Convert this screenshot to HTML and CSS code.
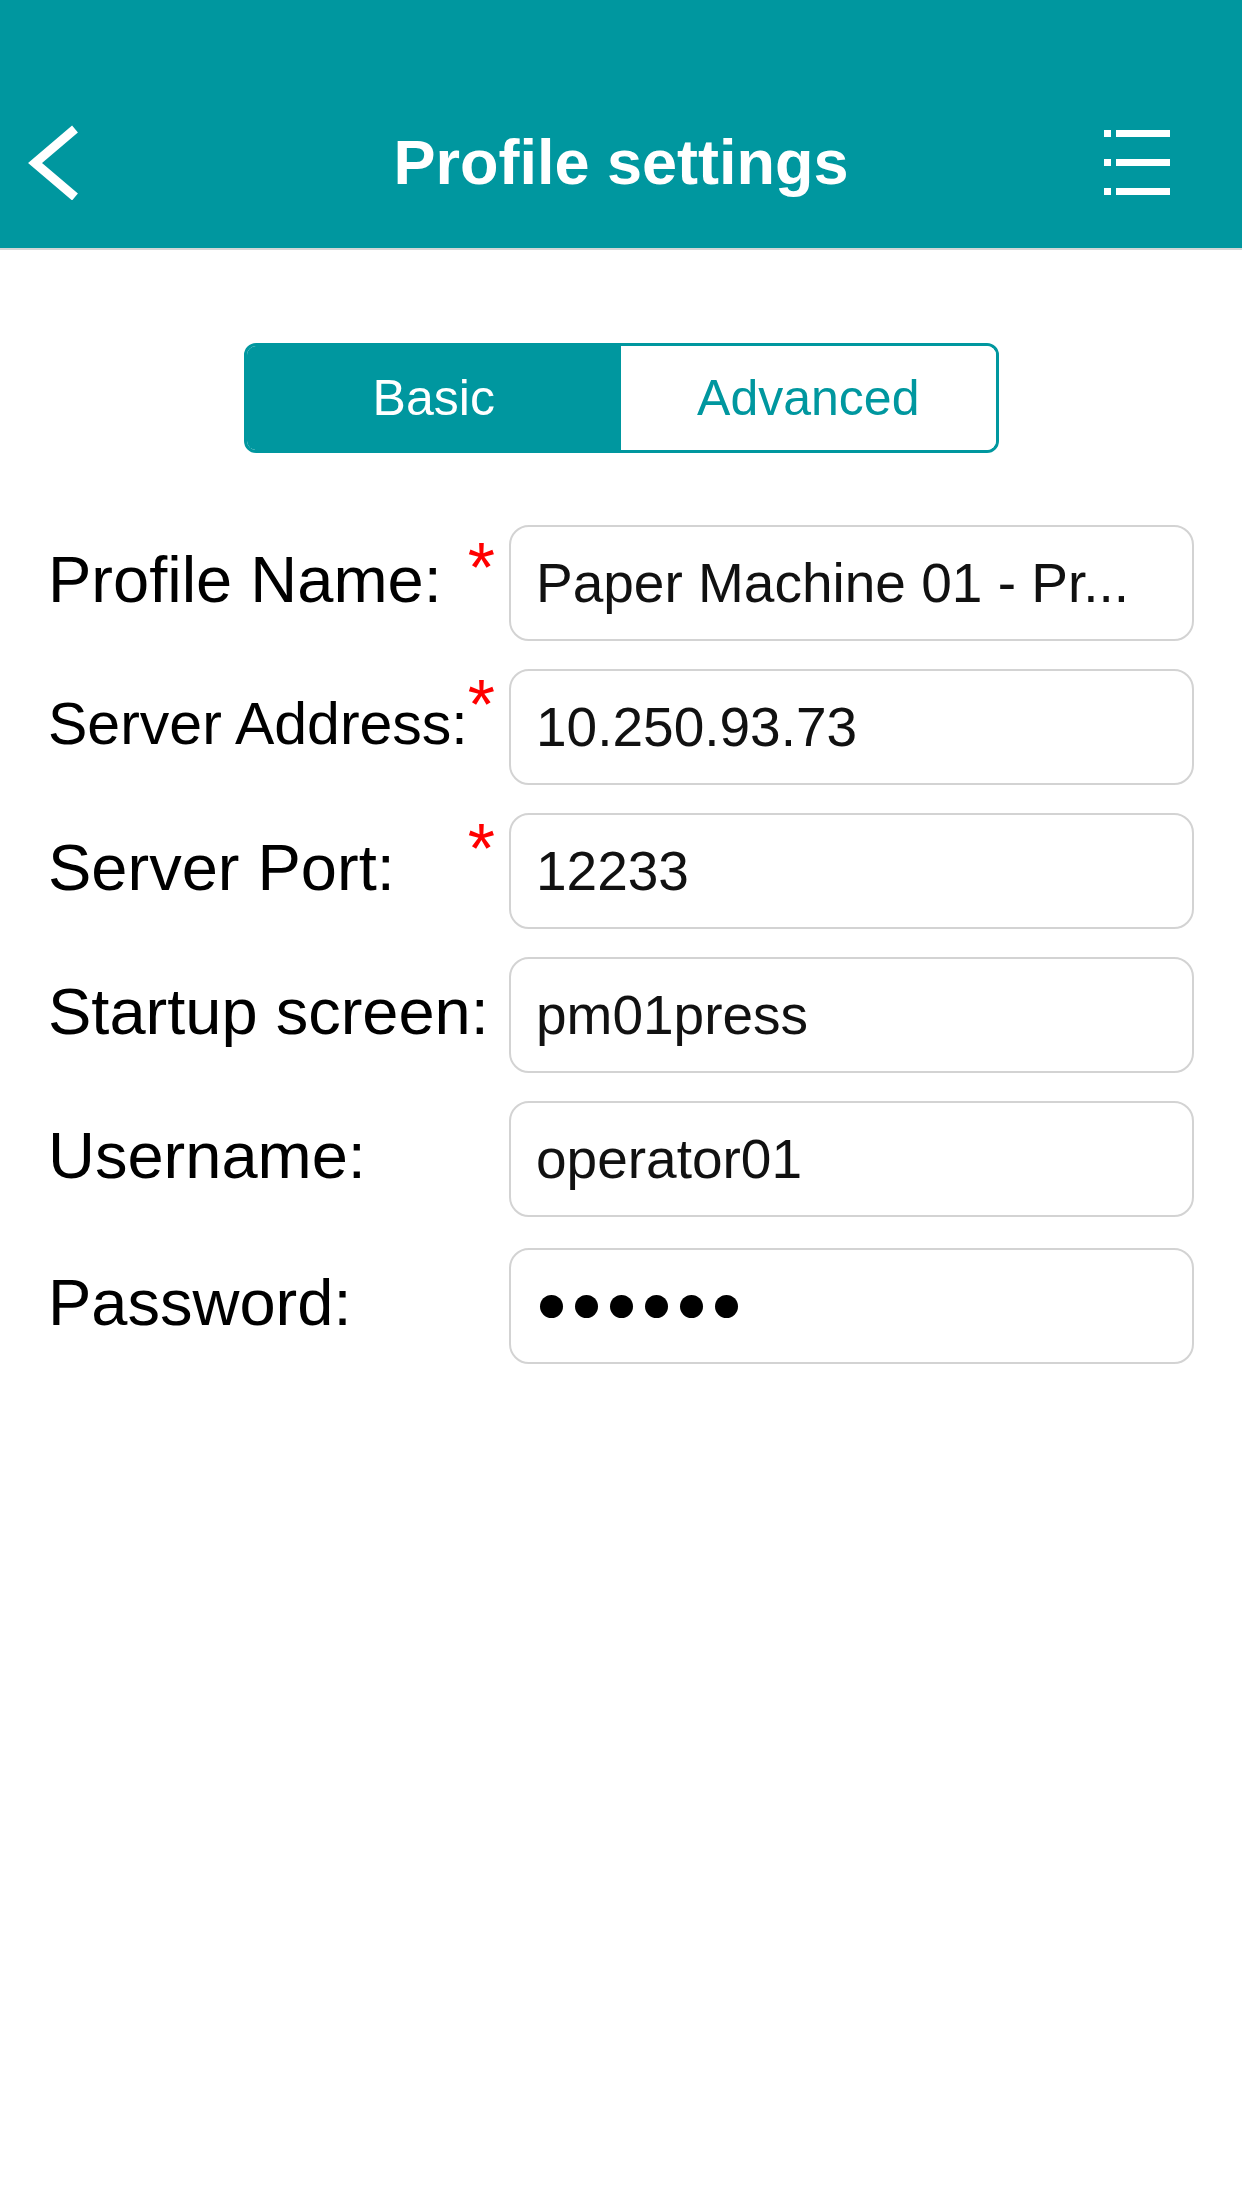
FILE: index.html
```html
<!DOCTYPE html>
<html lang="en">
<head>
<meta charset="utf-8">
<title>Profile settings</title>
<link rel="stylesheet" href="styles.css">
</head>
<body>
<header class="navbar">
  <div class="nav-side nav-left">
    <svg class="icon-back" width="52" height="76" viewBox="0 0 52 76" aria-hidden="true">
      <polyline points="47,5 7,39 47,73" fill="none" stroke="#fff" stroke-width="9" stroke-linejoin="miter"/>
    </svg>
  </div>
  <h1 class="nav-title">Profile settings</h1>
  <div class="nav-side nav-right">
    <svg class="icon-menu" width="66" height="70" viewBox="0 0 66 70" aria-hidden="true">
      <rect x="0" y="3" width="7" height="7" fill="#fff"/>
      <rect x="12" y="3" width="54" height="7" fill="#fff"/>
      <rect x="0" y="32" width="7" height="7" fill="#fff"/>
      <rect x="12" y="32" width="54" height="7" fill="#fff"/>
      <rect x="0" y="61" width="7" height="7" fill="#fff"/>
      <rect x="12" y="61" width="54" height="7" fill="#fff"/>
    </svg>
  </div>
</header>

<main class="content">
  <div class="segmented">
    <div class="seg seg-active">Basic</div>
    <div class="seg">Advanced</div>
  </div>

  <div class="form">
    <div class="row">
      <div class="label-cell"><span class="label">Profile Name:</span><span class="req req-first">*</span></div>
      <div class="field">Paper Machine 01 - Pr...</div>
    </div>
    <div class="row">
      <div class="label-cell"><span class="label label-small">Server Address:</span><span class="req">*</span></div>
      <div class="field">10.250.93.73</div>
    </div>
    <div class="row">
      <div class="label-cell"><span class="label">Server Port:</span><span class="req">*</span></div>
      <div class="field">12233</div>
    </div>
    <div class="row">
      <div class="label-cell"><span class="label">Startup screen:</span></div>
      <div class="field">pm01press</div>
    </div>
    <div class="row">
      <div class="label-cell"><span class="label">Username:</span></div>
      <div class="field">operator01</div>
    </div>
    <div class="row row-password">
      <div class="label-cell"><span class="label">Password:</span></div>
      <div class="field">
        <div class="dots"><span class="dot"></span><span class="dot"></span><span class="dot"></span><span class="dot"></span><span class="dot"></span><span class="dot"></span></div>
      </div>
    </div>
  </div>
</main>
</body>
</html>
```

FILE: styles.css
```css
* {
  box-sizing: border-box;
}

html, body {
  margin: 0;
  padding: 0;
  background: #ffffff;
}

body {
  width: 1242px;
  min-height: 2208px;
  font-family: "Liberation Sans", Arial, Helvetica, sans-serif;
  color: #000;
}

.navbar {
  height: 250px;
  background: #00979f;
  border-bottom: 2px solid #d2d6d6;
  display: flex;
  align-items: center;
  padding-top: 76px;
}

.nav-side {
  width: 200px;
  flex: none;
  display: flex;
  align-items: center;
}

.nav-left {
  padding-left: 28px;
}

.nav-right {
  justify-content: flex-end;
  padding-right: 72px;
}

.icon-back,
.icon-menu {
  display: block;
}

.nav-title {
  flex: 1;
  margin: 0;
  text-align: center;
  color: #ffffff;
  font-size: 63px;
  font-weight: 700;
  line-height: normal;
}

.content {
  display: flex;
  flex-direction: column;
}

.segmented {
  margin: 93px auto 0;
  width: 755px;
  height: 110px;
  border: 3px solid #00979f;
  border-radius: 12px;
  display: flex;
  overflow: hidden;
}

.seg {
  flex: 1;
  display: flex;
  align-items: center;
  justify-content: center;
  font-size: 50px;
  color: #00979f;
  background: #ffffff;
}

.seg-active {
  background: #00979f;
  color: #ffffff;
}

.form {
  margin-top: 72px;
  display: flex;
  flex-direction: column;
  gap: 28px;
}

.row {
  display: flex;
  height: 116px;
  padding: 0 48px;
}

.row-password {
  margin-top: 3px;
}

.label-cell {
  width: 461px;
  flex: none;
  display: flex;
  justify-content: space-between;
  align-items: center;
  padding-right: 14px;
}

.label {
  font-size: 65px;
  white-space: nowrap;
  padding-bottom: 7px;
}

.label-small {
  font-size: 59px;
}

.req {
  color: #ff0000;
  font-size: 70px;
  line-height: 1;
  align-self: flex-start;
  margin-top: 1px;
}

.req-first {
  margin-top: 8px;
}

.field {
  flex: 1;
  border: 2px solid #d3d3d3;
  border-radius: 20px;
  display: flex;
  align-items: center;
  padding: 0 20px 0 25px;
  font-size: 55px;
  color: #111;
  white-space: nowrap;
  overflow: hidden;
}

.dots {
  display: flex;
  gap: 12px;
  margin-left: 4px;
}

.dot {
  width: 23px;
  height: 23px;
  border-radius: 50%;
  background: #000;
}
```
